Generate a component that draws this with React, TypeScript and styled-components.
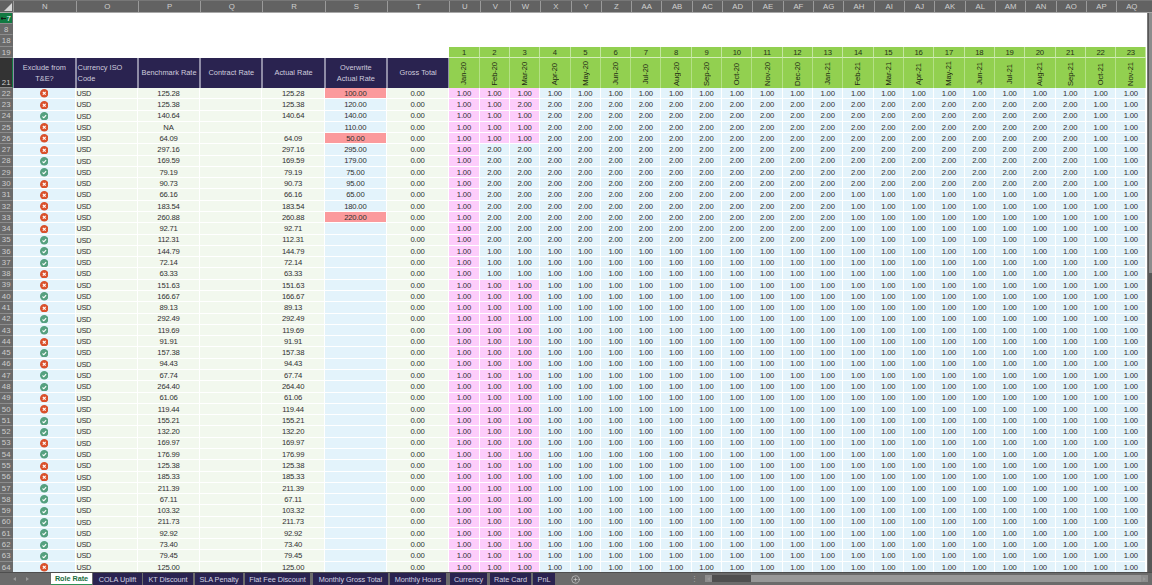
import React from 'react';
import styled, { createGlobalStyle } from 'styled-components';
import { CirclePlus } from 'lucide-react';

const GlobalStyle = createGlobalStyle`
  html, body {
    margin: 0;
    padding: 0;
    background: #666;
    overflow: hidden;
  }
  * {
    box-sizing: border-box;
  }
`;

const COLUMNS = '13.3px repeat(7, 62.29px) repeat(23, 30.32px)';

const Frame = styled.div`
  width: 1152px;
  height: 585px;
  display: flex;
  flex-direction: column;
  overflow: hidden;
  background: #666;
  font-family: "Liberation Sans", Arial, sans-serif;
  font-size: 7.7px;
  letter-spacing: -0.2px;
  color: #303030;
`;

const ColumnBar = styled.div`
  height: 13px;
  flex: none;
  display: grid;
  grid-template-columns: ${COLUMNS} 1fr;
  background: #626262;
  border-top: 1px solid #777;
  border-bottom: 1px solid #a8a8a8;
`;

const Corner = styled.div`
  display: flex;
  align-items: flex-end;
  justify-content: flex-end;
  padding: 0 1px 1px 0;
`;

const ColumnLetter = styled.div`
  display: flex;
  align-items: center;
  justify-content: center;
  color: #cfcfcf;
  font-size: 7.8px;
  letter-spacing: 0;
  border-left: 1px solid #9a9a9a;
`;

const Middle = styled.div`
  flex: 1;
  min-height: 0;
  display: flex;
`;

const Sheet = styled.div`
  width: 1146.7px;
  height: 100%;
  overflow: hidden;
  display: grid;
  grid-template-columns: ${COLUMNS};
  grid-template-rows: 11.4px 11px 11.2px 11.7px 29.7px;
  grid-auto-rows: 11.29px;
  align-content: start;
  background: #fff;
`;

const VScroll = styled.div`
  flex: 1;
  background: #575757;
  border-left: 1px solid #777;
`;

const VThumb = styled.div`
  height: 260px;
  margin-left: 1px;
  background: #8c8c8c;
`;

const RowHead = styled.div<{ $kind?: 'active' | 'tall' }>`
  display: flex;
  align-items: ${p => (p.$kind === 'tall' ? 'flex-end' : 'center')};
  justify-content: center;
  font-size: 7.8px;
  letter-spacing: 0;
  line-height: 1;
  padding-top: 1px;
  color: ${p => (p.$kind === 'active' ? '#fff' : '#cdcdcd')};
  background: ${p =>
    p.$kind === 'active' ? '#127a42' : p.$kind === 'tall' ? '#333' : '#6a6a6a'};
  border-bottom: 1px solid #8c8c8c;
  border-right: 1px solid ${p => (p.$kind === 'tall' ? '#127a42' : '#6a6a6a')};
`;

const Blank = styled.div<{ $span: string }>`
  grid-column: ${p => p.$span};
  background: #fff;
`;

const MonthNumber = styled.div`
  display: flex;
  align-items: center;
  justify-content: center;
  padding-top: 1px;
  background: #92d050;
  color: #26331a;
  border-right: 1px solid #c4e6a0;
  border-bottom: 1px solid #d4edba;
`;

const HeadCell = styled.div<{ $left?: boolean }>`
  display: flex;
  align-items: center;
  justify-content: ${p => (p.$left ? 'flex-start' : 'center')};
  text-align: ${p => (p.$left ? 'left' : 'center')};
  padding: ${p => (p.$left ? '0 1px' : '0 2px')};
  background: #2a2350;
  color: #cfccde;
  font-size: 7.4px;
  letter-spacing: 0;
  line-height: 11.4px;
  border-right: 1px solid #8f8ca6;
  border-left: 1px solid #8f8ca6;
`;

const MonthCell = styled.div`
  display: flex;
  align-items: center;
  justify-content: center;
  padding-top: 1px;
  background: #92d050;
  border-right: 1px solid #b4e085;
`;

const MonthLabel = styled.span`
  writing-mode: vertical-rl;
  transform: rotate(180deg);
  color: #1f2a14;
  font-size: 7.6px;
  letter-spacing: -0.1px;
`;

const TONES = {
  blue: '#e3f3fb',
  green: '#f2f8ee',
  pink: '#fdcdfb',
  red: '#fb9a9c',
};

const Cell = styled.div<{ $tone: keyof typeof TONES; $left?: boolean }>`
  display: flex;
  align-items: center;
  justify-content: ${p => (p.$left ? 'flex-start' : 'center')};
  padding: ${p => (p.$left ? '1px 0 0 1px' : '1px 0 0')};
  background: ${p => TONES[p.$tone]};
  border-right: 1px solid #fff;
  border-bottom: 1px solid #fff;
  line-height: 1;
  white-space: nowrap;
  letter-spacing: ${p => (p.$left ? '-0.4px' : '-0.2px')};
  font-size: ${p => (p.$left ? '7.3px' : '7.7px')};
`;

const TabBar = styled.div`
  height: 13px;
  flex: none;
  display: flex;
  align-items: stretch;
  background: #6b6b6b;
  border-top: 1px solid #4e4e4e;
`;

const TabNav = styled.div`
  width: 51px;
  flex: none;
  display: flex;
  align-items: center;
  gap: 10px;
  padding-left: 13px;
`;

const Caret = styled.span<{ $right?: boolean }>`
  width: 0;
  height: 0;
  border-top: 2px solid transparent;
  border-bottom: 2px solid transparent;
  border-left: ${p => (p.$right ? '3px solid #999' : 'none')};
  border-right: ${p => (p.$right ? 'none' : '3px solid #999')};
`;

const Tabs = styled.div`
  display: flex;
  height: 12px;
`;

const Tab = styled.div<{ $active?: boolean; $width: number; $gap: number }>`
  width: ${p => p.$width}px;
  margin-right: ${p => p.$gap}px;
  display: flex;
  align-items: center;
  justify-content: center;
  font-size: 7.3px;
  letter-spacing: -0.05px;
  white-space: nowrap;
  background: ${p => (p.$active ? '#fff' : '#2a2350')};
  color: ${p => (p.$active ? '#1b6f3f' : '#d3d1e2')};
  font-weight: ${p => (p.$active ? 700 : 400)};
  border-bottom: ${p => (p.$active ? '1px solid #2f8f57' : 'none')};
`;

const AddSheet = styled.div`
  width: 44px;
  flex: none;
  display: flex;
  align-items: center;
  justify-content: center;
  padding-right: 3px;
  color: #d8d8d8;
`;

const Splitter = styled.div`
  width: 106px;
  flex: none;
  display: flex;
  align-items: center;
  justify-content: flex-end;
  padding-right: 7px;
  color: #a8a8a8;
  font-size: 7px;
`;

const HScroll = styled.div`
  width: 443px;
  height: 7px;
  margin-top: 2px;
  display: flex;
  background: #4f4f4f;
`;

const ScrollButton = styled.div`
  width: 7px;
  flex: none;
  display: flex;
  align-items: center;
  justify-content: center;
  background: #8d8d8d;
`;

const ScrollTrack = styled.div`
  width: 39px;
  flex: none;
`;

const ScrollThumb = styled.div`
  flex: 1;
  background: #989898;
`;

const StatusIcon = ({ ok }: { ok: boolean }) => (
  <svg width="8.5" height="8.5" viewBox="0 0 10 10">
    <circle cx="5" cy="5" r="5" fill={ok ? '#55a07f' : '#d9512c'} />
    {ok ? (
      <path d="M3 5.3 L4.5 6.8 L7.2 3.6" fill="none" stroke="#fff" strokeWidth="1.3" />
    ) : (
      <path d="M3.3 3.3 L6.7 6.7 M6.7 3.3 L3.3 6.7" fill="none" stroke="#fff" strokeWidth="1.4" />
    )}
  </svg>
);

const letters = [
  'N', 'O', 'P', 'Q', 'R', 'S', 'T', 'U', 'V', 'W', 'X', 'Y', 'Z', 'AA', 'AB',
  'AC', 'AD', 'AE', 'AF', 'AG', 'AH', 'AI', 'AJ', 'AK', 'AL', 'AM', 'AN', 'AO', 'AP', 'AQ',
];

const months = [
  'Jan-20', 'Feb-20', 'Mar-20', 'Apr-20', 'May-20', 'Jun-20', 'Jul-20', 'Aug-20',
  'Sep-20', 'Oct-20', 'Nov-20', 'Dec-20', 'Jan-21', 'Feb-21', 'Mar-21', 'Apr-21',
  'May-21', 'Jun-21', 'Jul-21', 'Aug-21', 'Sep-21', 'Oct-21', 'Nov-21',
];

// status (1 = included), benchmark rate, overwrite rate
const rows: [number, string, string][] = [
  [0, '125.28', '100.00'], [0, '125.38', '120.00'], [1, '140.64', '140.00'],
  [0, 'NA', '110.00'], [0, '64.09', '50.00'], [0, '297.16', '295.00'],
  [1, '169.59', '179.00'], [1, '79.19', '75.00'], [0, '90.73', '95.00'],
  [0, '66.16', '65.00'], [0, '183.54', '180.00'], [0, '260.88', '220.00'],
  [0, '92.71', ''], [1, '112.31', ''], [1, '144.79', ''], [1, '72.14', ''],
  [0, '63.33', ''], [0, '151.63', ''], [1, '166.67', ''], [0, '89.13', ''],
  [1, '292.49', ''], [1, '119.69', ''], [0, '91.91', ''], [1, '157.38', ''],
  [0, '94.43', ''], [1, '67.74', ''], [1, '264.40', ''], [0, '61.06', ''],
  [0, '119.44', ''], [1, '155.21', ''], [1, '132.20', ''], [0, '169.97', ''],
  [1, '176.99', ''], [0, '125.38', ''], [0, '185.33', ''], [1, '211.39', ''],
  [1, '67.11', ''], [1, '103.32', ''], [1, '211.73', ''], [1, '92.92', ''],
  [1, '73.40', ''], [1, '79.45', ''], [0, '125.00', ''],
];

const flagged = ['100.00', '50.00', '220.00'];

// first month still on 1.00 for each block of rows
const rateFor = (row: number, col: number) => {
  if (row === 22 || row >= 36) return '1.00';
  if (col > (row <= 30 ? 20 : 12)) return '1.00';
  if (row === 23) return col < 2 ? '1.00' : '2.00';
  if (row <= 26) return col < 3 ? '1.00' : '2.00';
  return col === 0 ? '1.00' : '2.00';
};

const isPink = (row: number, col: number) =>
  col === 0 || (col <= 2 && (row <= 26 || row >= 39));

const tabs: [string, number, number][] = [
  ['Role Rate', 41, 1], ['COLA Uplift', 49, 1], ['KT Discount', 50, 2],
  ['SLA Penalty', 48, 2], ['Flat Fee Discount', 65, 3], ['Monthly Gross Total', 75, 2],
  ['Monthly Hours', 56, 4], ['Currency', 37, 3], ['Rate Card', 41, 2], ['PnL', 22, 0],
];

const App = () => {
  return (
    <Frame>
      <GlobalStyle />
      <ColumnBar>
        <Corner>
          <svg width="8" height="8" viewBox="0 0 8 8">
            <path d="M8 0 V8 H0 Z" fill="#d8d8d8" />
          </svg>
        </Corner>
        {letters.map(l => (
          <ColumnLetter key={l}>{l}</ColumnLetter>
        ))}
      </ColumnBar>

      <Middle>
        <Sheet>
          <RowHead $kind="active">
            <svg width="5" height="5" viewBox="0 0 5 5">
              <path d="M0 2.5 H5 M1.5 1 L0 2.5 L1.5 4" fill="none" stroke="#111" strokeWidth="0.9" />
            </svg>
            7
          </RowHead>
          <Blank $span="2 / -1" />
          <RowHead>8</RowHead>
          <Blank $span="2 / -1" />
          <RowHead>18</RowHead>
          <Blank $span="2 / -1" />
          <RowHead>19</RowHead>
          <Blank $span="2 / 9" />
          {months.map((m, i) => (
            <MonthNumber key={m}>{i + 1}</MonthNumber>
          ))}

          <RowHead $kind="tall">21</RowHead>
          <HeadCell>Exclude from T&amp;E?</HeadCell>
          <HeadCell $left>Currency ISO Code</HeadCell>
          <HeadCell>Benchmark Rate</HeadCell>
          <HeadCell>Contract Rate</HeadCell>
          <HeadCell>Actual Rate</HeadCell>
          <HeadCell>Overwrite<br />Actual Rate</HeadCell>
          <HeadCell>Gross Total</HeadCell>
          {months.map(m => (
            <MonthCell key={m}>
              <MonthLabel>{m}</MonthLabel>
            </MonthCell>
          ))}

          {rows.map(([ok, bench, over], i) => {
            const row = 22 + i;
            return (
              <React.Fragment key={row}>
                <RowHead>{row}</RowHead>
                <Cell $tone="blue">
                  <StatusIcon ok={ok === 1} />
                </Cell>
                <Cell $tone="green" $left>USD</Cell>
                <Cell $tone="green">{bench}</Cell>
                <Cell $tone="green" />
                <Cell $tone="green">{bench === 'NA' ? '' : bench}</Cell>
                <Cell $tone={flagged.includes(over) ? 'red' : 'blue'}>{over}</Cell>
                <Cell $tone="green">0.00</Cell>
                {months.map((m, col) => (
                  <Cell key={m} $tone={isPink(row, col) ? 'pink' : 'blue'}>
                    {rateFor(row, col)}
                  </Cell>
                ))}
              </React.Fragment>
            );
          })}
        </Sheet>
        <VScroll>
          <VThumb />
        </VScroll>
      </Middle>

      <TabBar>
        <TabNav>
          <Caret />
          <Caret $right />
        </TabNav>
        <Tabs>
          {tabs.map(([name, width, gap], i) => (
            <Tab key={name} $active={i === 0} $width={width} $gap={gap}>
              {name}
            </Tab>
          ))}
        </Tabs>
        <AddSheet>
          <CirclePlus size={9} strokeWidth={1.6} />
        </AddSheet>
        <Splitter>⋮</Splitter>
        <HScroll>
          <ScrollButton>
            <Caret />
          </ScrollButton>
          <ScrollTrack />
          <ScrollThumb />
          <ScrollButton>
            <Caret $right />
          </ScrollButton>
        </HScroll>
      </TabBar>
    </Frame>
  );
};

export default App;
